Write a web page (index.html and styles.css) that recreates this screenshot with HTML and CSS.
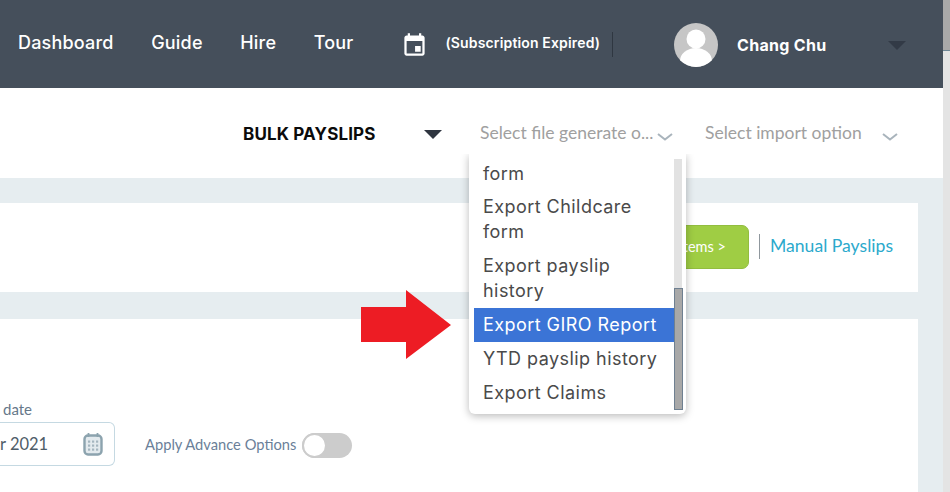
FILE: index.html
```html
<!DOCTYPE html>
<html lang="en">
<head>
<meta charset="utf-8">
<title>Bulk Payslips</title>
<link rel="stylesheet" href="styles.css">
</head>
<body>
<div class="app">
  <div class="page">
    <header class="topbar">
      <nav class="nav">
        <a>Dashboard</a>
        <a>Guide</a>
        <a>Hire</a>
        <a>Tour</a>
      </nav>
      <svg class="cal" viewBox="0 0 24 24" width="27" height="27" aria-hidden="true"><path fill="#fff" d="M19 3h-1V1h-2v2H8V1H6v2H5c-1.100 0-2 .9-2 2v14c0 1.100.9 2 2 2h14c1.100 0 2-.9 2-2V5c0-1.100-.9-2-2-2zm0 16H5V8h14v11zM12.500 12.500h5v5h-5z"/></svg>
      <span class="sub">(Subscription Expired)</span>
      <span class="vline"></span>
      <svg class="avatar" viewBox="0 0 44 44" width="44" height="44" aria-hidden="true"><defs><clipPath id="av"><circle cx="22" cy="22" r="22"/></clipPath></defs><circle cx="22" cy="22" r="22" fill="#c6c6c6"/><g clip-path="url(#av)" fill="#fff"><circle cx="22" cy="16" r="9.500"/><ellipse cx="22" cy="38" rx="16" ry="13"/></g></svg>
      <span class="user">Chang Chu</span>
      <span class="tri tri-user"></span>
    </header>

    <section class="toolbar">
      <strong class="bulk">BULK PAYSLIPS</strong>
      <span class="tri tri-bulk"></span>
      <span class="sel sel-file">Select file generate o...</span>
      <svg class="chev chev-file" viewBox="0 0 16 8" width="16" height="8" aria-hidden="true"><path d="M1 1l7 5.500L15 1" fill="none" stroke="#a9b4bc" stroke-width="2"/></svg>
      <span class="sel sel-import">Select import option</span>
      <svg class="chev chev-import" viewBox="0 0 16 8" width="16" height="8" aria-hidden="true"><path d="M1 1l7 5.500L15 1" fill="none" stroke="#a9b4bc" stroke-width="2"/></svg>
    </section>

    <main class="main">
      <section class="card card-actions">
        <button class="green">Add Pay Items &gt;</button>
        <span class="sep"></span>
        <a class="manual">Manual Payslips</a>
      </section>
      <section class="card card-form">
        <div class="field">
          <label class="flabel">date</label>
          <div class="input">
            <span class="value">r 2021</span>
            <svg viewBox="0 0 20 24" width="20" height="24" aria-hidden="true"><rect x="1.500" y="3.500" width="17" height="19" rx="3.500" fill="#e3eaee" stroke="#8ca3ae" stroke-width="2.400"/><path d="M5.500 1v4M14.500 1v4" stroke="#8ca3ae" stroke-width="1.800"/><g fill="#a4b5bf"><rect x="5" y="8.500" width="2.200" height="2.200"/><rect x="9" y="8.500" width="2.200" height="2.200"/><rect x="13" y="8.500" width="2.200" height="2.200"/><rect x="5" y="12.500" width="2.200" height="2.200"/><rect x="9" y="12.500" width="2.200" height="2.200"/><rect x="13" y="12.500" width="2.200" height="2.200"/><rect x="5" y="16.500" width="2.200" height="2.200"/><rect x="9" y="16.500" width="2.200" height="2.200"/><rect x="13" y="16.500" width="2.200" height="2.200"/></g></svg>
          </div>
        </div>
        <span class="adv">Apply Advance Options</span>
        <span class="toggle"><span class="knob"></span></span>
      </section>
    </main>
  </div>
  <div class="pagebar"><span class="pagethumb"></span></div>

  <div class="menu">
    <ul class="list">
      <li class="first">form</li>
      <li>Export Childcare form</li>
      <li>Export payslip history</li>
      <li class="active">Export GIRO Report</li>
      <li>YTD payslip history</li>
      <li>Export Claims</li>
    </ul>
    <div class="menubar"><span class="menuthumb"></span></div>
  </div>

  <svg class="arrow" viewBox="0 0 90 69" width="90" height="69" aria-hidden="true"><path fill="#ed1c24" d="M0 17h45V0l45 35-45 34V52H0z"/></svg>
</div>
</body>
</html>
```

FILE: styles.css
```css
* { box-sizing: border-box; }
html, body { margin: 0; padding: 0; }
body { font-family: "Lato", "Liberation Sans", sans-serif; background: #fff; }

.app { position: relative; display: flex; width: 950px; height: 492px; overflow: hidden; }
.page { display: flex; flex-direction: column; width: 943px; flex: none; }

.pagebar { width: 7px; flex: none; background: #e4e4e4; }
.pagethumb { display: block; height: 51px; background: #a9a9a9; border-bottom: 1px solid #6f8796; }

.topbar { display: flex; align-items: center; height: 88px; flex: none; background: #454f5b; color: #fff; padding-left: 18px; font-family: "Inter", "Noto Sans", sans-serif; }
.nav { display: flex; gap: 37.500px; font-size: 18px; font-weight: 500; letter-spacing: .2px; margin-top: -3px; }
.cal { margin-left: 48px; margin-top: 2px; }
.sub { margin-left: 17px; font-size: 14px; font-weight: 600; letter-spacing: .15px; margin-top: -3px; white-space: nowrap; }
.vline { width: 1px; height: 25px; background: #2f3741; margin-left: 12px; }
.avatar { margin-left: 61px; margin-top: 2px; }
.user { margin-left: 19px; font-size: 16px; font-weight: 700; letter-spacing: .3px; margin-top: 2px; white-space: nowrap; }
.tri { width: 0; height: 0; border-style: solid; border-color: transparent; border-bottom-width: 0; }
.tri-user { margin-left: 62px; border-width: 9px 9px 0; border-top-color: #323a46; margin-top: 2px; }

.toolbar { display: flex; align-items: center; height: 90px; flex: none; background: #fff; padding-left: 243px; }
.bulk { font-family: "Inter", "Noto Sans", sans-serif; font-size: 17px; font-weight: 700; letter-spacing: .15px; color: #0b0b0b; width: 133px; white-space: nowrap; margin-top: 2px; }
.tri-bulk { margin-left: 48px; margin-top: 2px; border-width: 9px 9.500px 0; border-top-color: #2f3540; }
.sel { font-size: 17.500px; color: #a0a0a0; white-space: nowrap; margin-top: -2px; }
.sel-file { margin-left: 38px; width: 173px; }
.chev { margin-top: 8px; }
.chev-file { margin-left: 4px; }
.sel-import { margin-left: 32px; width: 156px; }
.chev-import { margin-left: 21px; }

.main { flex: 1; background: #e6edf0; padding: 25px 25px 0 0; display: flex; flex-direction: column; gap: 27px; }
.card { background: #fff; }
.card-actions { display: flex; align-items: center; justify-content: flex-end; height: 89px; padding-right: 25px; }
.green { width: 150px; height: 44px; background: #9fcd44; border: 1px solid #92bd3f; border-radius: 7px; color: #fff; font-family: "Lato", sans-serif; font-size: 14.500px; padding: 0 22px 0 0; text-align: right; margin-top: -2px; }
.sep { width: 1px; height: 25px; background: #8f979d; margin: -2px 10px 0 10px; }
.manual { font-size: 17.600px; color: #2ba9cc; white-space: nowrap; margin-top: -4px; }

.card-form { flex: 1; display: flex; align-items: flex-start; padding-top: 82px; }
.field { flex: none; width: 115px; }
.flabel { display: block; font-size: 15px; color: #66788a; line-height: 17px; padding-left: 3px; height: 21px; }
.input { display: flex; align-items: center; justify-content: space-between; height: 44px; border: 1px solid #c5d9e2; border-left: 0; border-radius: 0 6px 6px 0; padding-right: 11px; }
.value { font-size: 16.500px; color: #4f5d68; white-space: nowrap; }
.adv { margin-left: 30px; margin-top: 34px; font-size: 14.700px; color: #6b7f99; white-space: nowrap; }
.toggle { display: block; width: 50px; height: 25px; margin-left: 6px; margin-top: 32px; border-radius: 13px; background: #cccccc; flex: none; }
.knob { display: block; width: 25px; height: 25px; border-radius: 50%; background: #fff; border: 2px solid #cccccc; }

.menu { position: absolute; left: 469px; top: 154px; width: 217px; height: 260px; display: flex; background: #fff; border-radius: 0 0 6px 6px; box-shadow: 0 2px 8px rgba(0, 0, 0, .28); clip-path: inset(0 -12px -12px -12px); padding: 0 5px 4px 5px; }
.list { list-style: none; margin: 0; padding: 7px 0 0; width: 200px; flex: none; font-family: "Inter", "Noto Sans", sans-serif; font-size: 18px; letter-spacing: .45px; line-height: 25px; color: #4a4a4a; }
.list li { padding: 4.500px 9px; }
.list .first { padding: 0 9px 3.500px; }
.list .active { background: #3b74d6; color: #fff; }
.menubar { width: 8px; margin-top: 5px; height: 251px; background: #e2e2e2; display: flex; flex-direction: column; justify-content: flex-end; }
.menuthumb { display: block; width: 9px; height: 122px; background: #a8a8a8; border: 1px solid #6f8091; }

.arrow { position: absolute; left: 361px; top: 290px; }
```
